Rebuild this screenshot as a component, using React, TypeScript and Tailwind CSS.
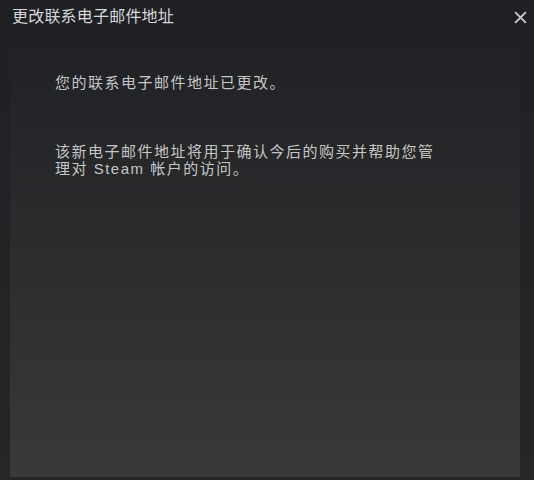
export default function App() {
  return (
    <div
      className="w-[534px] h-[480px] flex flex-col bg-linear-to-b from-[#1e2024] to-[#262626]"
      style={{ fontFamily: '"Liberation Sans", "Noto Sans CJK SC", sans-serif' }}
    >
      <div className="h-[38px] shrink-0 flex items-start justify-between pl-[12px] pr-[6px] pt-[7px]">
        <div className="text-[16px] leading-[20px] tracking-[0.2px] text-[#d6d7d8]">更改联系电子邮件地址</div>
        <button className="w-[16px] h-[16px] mt-[2px] flex items-center justify-center">
          <svg viewBox="0 0 14 14" className="w-[13px] h-[13px]">
            <path d="M2 2 L12 12 M12 2 L2 12" stroke="#c4c4c4" strokeWidth="2.2" strokeLinecap="square" />
          </svg>
        </button>
      </div>
      <div className="flex-1 min-h-0 pl-[10px] pr-[14px] pb-[3px]">
        <div className="h-full bg-linear-to-b from-[#1f2124] to-[#393939] pl-[45px] pt-[36px] text-[15px] leading-[17px] tracking-[1.5px] text-[#c6c6c6]">
          <p>您的联系电子邮件地址已更改。</p>
          <p className="mt-[52px] w-[388px]">
            该新电子邮件地址将用于确认今后的购买并帮助您管理对 Steam 帐户的访问。
          </p>
        </div>
      </div>
    </div>
  );
}
